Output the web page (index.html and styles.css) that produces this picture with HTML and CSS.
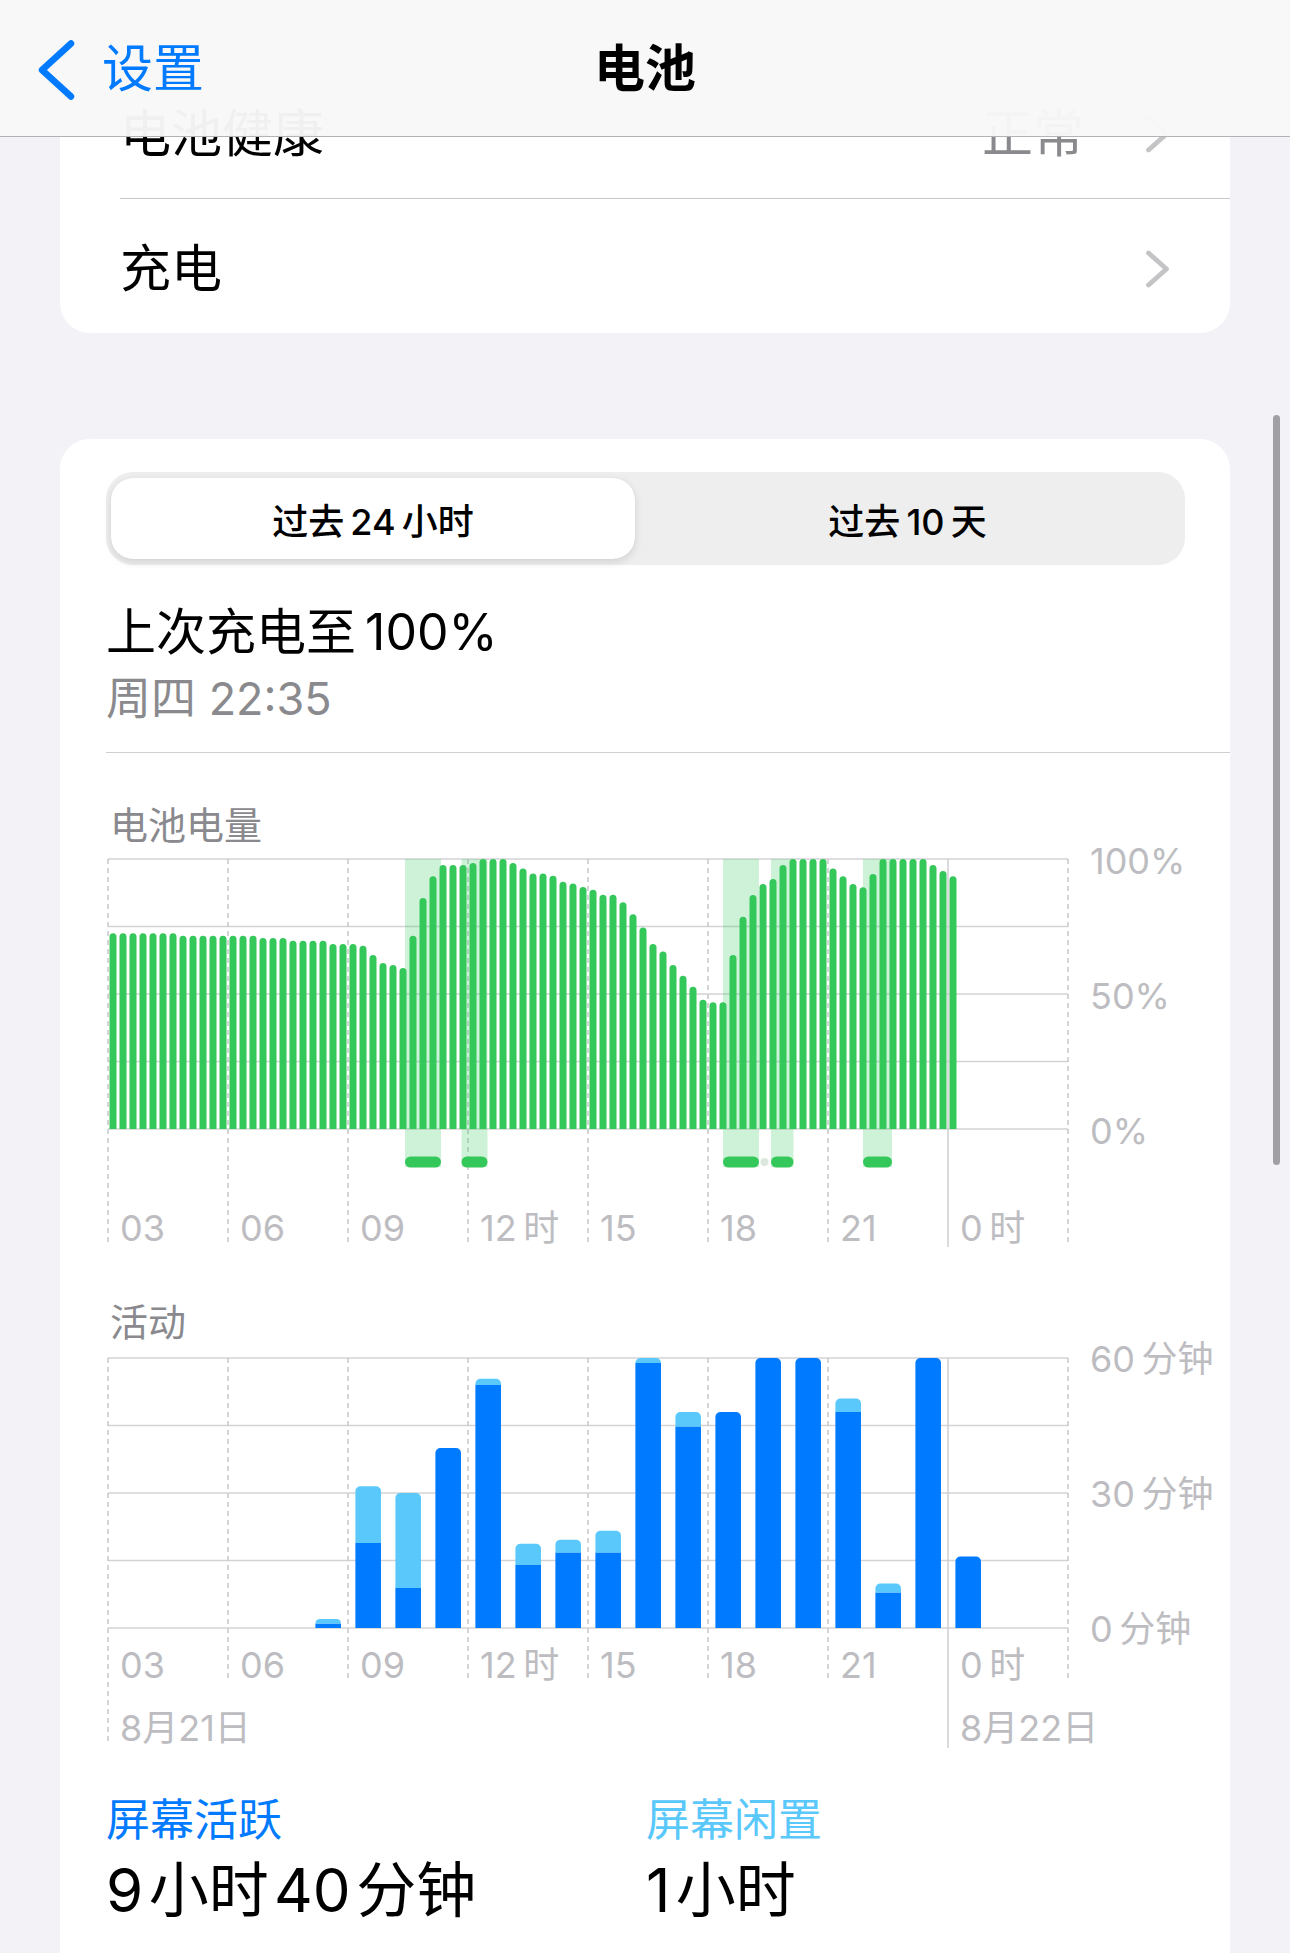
FILE: index.html
```html
<!doctype html>
<html lang="zh-CN">
  <head>
    <meta charset="UTF-8" />
    <meta name="viewport" content="width=device-width, initial-scale=1.0" />
    <title>电池</title>
    <link rel="stylesheet" href="styles.css">
  </head>
  <body>
    <header class="navbar">
      <a class="back" href="#">
        <svg class="back-icon" width="42" height="62" viewBox="0 0 42 62">
          <path d="M35 5.5 L6 32 L35 58.5" />
        </svg>
        <span>设置</span>
      </a>
      <h1 class="nav-title">电池</h1>
      <span></span>
    </header>

    <main class="content">
      <section class="group">
        <div class="row">
          <span class="row-label">电池健康</span>
          <span class="row-value">正常</span>
          <svg class="chevron" width="24" height="40" viewBox="0 0 24 40">
            <path d="M3.5 4 L21.5 20 L3.5 36" />
          </svg>
        </div>
        <div class="row">
          <span class="row-label">充电</span>
          <svg class="chevron" width="24" height="40" viewBox="0 0 24 40">
            <path d="M3.5 4 L21.5 20 L3.5 36" />
          </svg>
        </div>
      </section>

      <section class="group usage">
        <div class="segmented">
          <div class="segment active">过去&thinsp;24&thinsp;小时</div>
          <div class="segment">过去&thinsp;10&thinsp;天</div>
        </div>

        <div class="last-charge">
          <div class="charge-title">上次充电至&thinsp;100%</div>
          <div class="charge-time">周四 22:35</div>
        </div>

        <hr class="divider" />

        <div class="chart-title">电池电量</div>
        <svg class="chart" id="batteryChart" width="1170" height="400" viewBox="0 0 1170 400">
          <g class="grid"></g>
          <g class="zones"></g>
          <g class="bars"></g>
          <g class="axis">
            <text x="1030" y="24.5">100%</text>
            <text x="1030" y="159.5">50%</text>
            <text x="1030" y="294.5">0%</text>
            <text x="60" y="391.5">03</text>
            <text x="180" y="391.5">06</text>
            <text x="300" y="391.5">09</text>
            <text x="420" y="391.5">12&thinsp;时</text>
            <text x="540" y="391.5">15</text>
            <text x="660" y="391.5">18</text>
            <text x="780" y="391.5">21</text>
            <text x="900" y="391.5">0&thinsp;时</text>
          </g>
        </svg>

        <div class="chart-title activity-title">活动</div>
        <svg class="chart activity-chart" id="activityChart" width="1170" height="400" viewBox="0 0 1170 400">
          <g class="grid"></g>
          <g class="bars"></g>
          <g class="axis">
            <text x="1030" y="24">60&thinsp;分钟</text>
            <text x="1030" y="159">30&thinsp;分钟</text>
            <text x="1030" y="294">0&thinsp;分钟</text>
            <text x="60" y="330">03</text>
            <text x="180" y="330">06</text>
            <text x="300" y="330">09</text>
            <text x="420" y="330">12&thinsp;时</text>
            <text x="540" y="330">15</text>
            <text x="660" y="330">18</text>
            <text x="780" y="330">21</text>
            <text x="900" y="330">0&thinsp;时</text>
            <text x="60" y="393">8月21日</text>
            <text x="900" y="393">8月22日</text>
          </g>
        </svg>

        <div class="summary">
          <div class="summary-item">
            <div class="summary-label active-label">屏幕活跃</div>
            <div class="summary-value">9&#8202;小时&#8202;40&#8202;分钟</div>
          </div>
          <div class="summary-item">
            <div class="summary-label idle-label">屏幕闲置</div>
            <div class="summary-value">1&#8202;小时</div>
          </div>
        </div>
      </section>
    </main>

    <div class="scroll-indicator"></div>

    <script src="script.js"></script>
  </body>
</html>
```

FILE: styles.css
```css
/* Reset */
body,
h1,
hr {
  margin: 0;
  padding: 0;
}

body {
  font-family: Inter, "Noto Sans CJK SC", sans-serif;
  background-color: #f2f2f7;
  color: #000;
  width: 1290px;
  height: 1953px;
  overflow: hidden;
}

/* Navigation bar */
.navbar {
  position: fixed;
  top: 0;
  left: 0;
  right: 0;
  z-index: 10;
  height: 137px;
  box-sizing: border-box;
  padding: 2px 0 0 36px;
  display: grid;
  grid-template-columns: 1fr auto 1fr;
  align-items: center;
  background: rgba(248, 248, 249, 0.97);
  border-bottom: 1px solid #b3b3b5;
}

.back {
  display: flex;
  align-items: center;
  color: #007aff;
  text-decoration: none;
  font-size: 51px;
  line-height: 60px;
}

.back-icon {
  display: block;
  margin-right: 24px;
}

.back-icon path {
  fill: none;
  stroke: #007aff;
  stroke-width: 6.5;
  stroke-linecap: round;
  stroke-linejoin: round;
}

.nav-title {
  font-size: 51px;
  line-height: 60px;
  font-weight: 600;
  margin-right: 36px;
}

/* Grouped list */
.content {
  padding: 63px 60px 0;
}

.group {
  background: #fff;
  border-radius: 30px;
}

.row {
  display: flex;
  align-items: center;
  height: 135px;
  box-sizing: border-box;
  margin-left: 60px;
  padding: 6px 61px 0 0;
  font-size: 51px;
  line-height: 60px;
}

.row + .row {
  border-top: 1px solid #c8c8cb;
}

.row-label {
  flex: 1;
}

.row-value {
  color: #8a8a8e;
  margin-right: 61px;
}

.chevron {
  display: block;
}

.chevron path {
  fill: none;
  stroke: #c4c4c7;
  stroke-width: 4.8;
  stroke-linecap: round;
  stroke-linejoin: round;
}

/* Usage card */
.usage {
  margin-top: 106px;
  padding: 33px 45px 80px 46px;
}

.segmented {
  display: grid;
  grid-template-columns: 524px 1fr;
  height: 93px;
  box-sizing: border-box;
  padding: 6px 5px;
  background: #eeeeef;
  border-radius: 27px;
}

.segment {
  display: flex;
  align-items: center;
  justify-content: center;
  font-size: 36px;
  font-weight: 500;
  border-radius: 22px;
}

.segment.active {
  background: #fff;
  box-shadow: 0 3px 8px rgba(0, 0, 0, 0.12), 0 0 1px rgba(0, 0, 0, 0.08);
}

.last-charge {
  margin-top: 37px;
}

.charge-title {
  font-size: 50px;
  line-height: 60px;
}

.charge-time {
  margin-top: 10px;
  font-size: 45px;
  line-height: 54px;
  color: #8a8a8e;
}

.divider {
  border: none;
  border-top: 1px solid #cfcfd2;
  margin: 26px -45px 0 0;
}

.chart-title {
  margin-top: 49px;
  padding-left: 4px;
  font-size: 38px;
  line-height: 46px;
  color: #8a8a8e;
}

.activity-title {
  margin-top: 50px;
}

.chart {
  display: block;
  overflow: visible;
  margin: 1px 0 0 -46px;
}

.activity-chart {
  margin-top: 2.5px;
}

.axis text {
  font-size: 36px;
  fill: #bdbdc1;
}

/* Summary */
.summary {
  display: grid;
  grid-template-columns: 540px 1fr;
  margin-top: 46px;
}

.summary-label {
  font-size: 44px;
  line-height: 52px;
}

.active-label {
  color: #007aff;
}

.idle-label {
  color: #5ac8fa;
}

.summary-value {
  margin-top: 9px;
  font-size: 60px;
  line-height: 70px;
}

.scroll-indicator {
  position: fixed;
  top: 415px;
  right: 10px;
  width: 7px;
  height: 750px;
  border-radius: 4px;
  background: #a0a0a5;
}
```

FILE: script.js
```js
const NS = 'http://www.w3.org/2000/svg';

// battery level every 15 minutes, from 03:00
const battery = [
  72.5, 72.5, 72.5, 72.5, 72.5, 72.5, 72.5,
  71.6, 71.6, 71.6, 71.6, 71.6, 71.6, 71.6, 71.6,
  70.7, 70.7, 70.7,
  69.7, 69.7, 69.7, 69.7,
  68.5, 68.5, 68.5,
  67.9, 64.4, 61.5, 60.7, 59.6,
  71.6, 85.6, 93.6, 97.8, 97.8, 97.8, 98.5, 100, 100, 100,
  98.5, 96.5, 94.6, 94.6, 93.8, 91.6, 90.9, 89.6, 88.6, 86.8,
  86.8, 84, 79.5, 74.6, 68.5, 65.7, 60.7, 56.8, 52.7, 47.9,
  46.9, 46.9, 64.4, 78.6, 86.7, 90.7, 92.6, 97.8, 100, 100,
  100, 100, 96.5, 93.6, 90.7, 89.5, 94.4, 100, 100, 100,
  100, 100, 97.8, 95.6, 93.6,
];

// charging periods (x start, x end)
const charging = [
  [345, 381],
  [401.5, 427.5],
  [663, 699],
  [711, 733.5],
  [803, 832],
];

// minutes per hour: [screen on, screen on + idle]
const activity = [
  [0, 0], [0, 0], [0, 0], [0, 0], [0, 0],
  [1, 2], [18.9, 31.5], [8.9, 30], [40, 40], [54, 55.4],
  [14, 18.7], [16.8, 19.6], [16.8, 21.6], [58.9, 60], [44.8, 48],
  [48, 48], [60, 60], [60, 60], [48, 51], [7.9, 9.9],
  [60, 60], [15.9, 15.9], [0, 0], [0, 0],
];

const LEFT = 48;
const BASE = 280;
const ROWS = [10, 77.5, 145, 212.5, 280];

function add(parent, name, attrs) {
  const node = document.createElementNS(NS, name);
  for (const key in attrs) node.setAttribute(key, attrs[key]);
  parent.appendChild(node);
  return node;
}

function barPath(x, w, top, bottom, r) {
  r = Math.min(r, (bottom - top), w / 2);
  return `M${x},${bottom}V${top + r}A${r},${r} 0 0 1 ${x + r},${top}` +
    `H${x + w - r}A${r},${r} 0 0 1 ${x + w},${top + r}V${bottom}Z`;
}

function drawGrid(svg, ends) {
  const g = svg.querySelector('.grid');
  ROWS.forEach((y) => {
    add(g, 'line', { x1: LEFT, x2: LEFT + 960, y1: y, y2: y, stroke: '#d3d3d7', 'stroke-width': 1.5 });
  });
  for (let k = 0; k <= 8; k++) {
    const x = LEFT + k * 120;
    if (k === 7) {
      add(g, 'line', { x1: x, x2: x, y1: 10, y2: ends.solid, stroke: '#cfcfd3', 'stroke-width': 1.5 });
    } else {
      add(g, 'line', {
        x1: x, x2: x, y1: 10, y2: k === 0 ? ends.first : ends.dashed,
        stroke: '#c8c8cc', 'stroke-width': 1.5, 'stroke-dasharray': '5 4',
      });
    }
  }
}

// battery chart
const batterySvg = document.getElementById('batteryChart');
drawGrid(batterySvg, { dashed: 393, first: 393, solid: 398 });

const zones = batterySvg.querySelector('.zones');
charging.forEach(([x1, x2]) => {
  add(zones, 'rect', { x: x1, y: 10, width: x2 - x1, height: 308, fill: 'rgba(52, 199, 89, 0.24)' });
  add(zones, 'rect', { x: x1, y: 307.5, width: x2 - x1, height: 11, rx: 5.5, fill: '#34c759' });
});
add(zones, 'circle', { cx: 704.5, cy: 313, r: 4, fill: '#dce8de' });

const batteryBars = batterySvg.querySelector('.bars');
battery.forEach((level, i) => {
  const x = 49.5 + i * 10;
  const top = BASE - level * 2.7;
  add(batteryBars, 'path', { d: barPath(x, 7, top, BASE, 3.5), fill: '#34c759' });
});

// activity chart
const activitySvg = document.getElementById('activityChart');
drawGrid(activitySvg, { dashed: 333, first: 395, solid: 400 });

const activityBars = activitySvg.querySelector('.bars');
activity.forEach(([on, total], h) => {
  if (total <= 0) return;
  const x = 55.4 + h * 40;
  const onTop = BASE - on * 4.5;
  const totalTop = BASE - total * 4.5;
  if (total > on + 0.05) {
    add(activityBars, 'rect', { x: x, y: onTop, width: 25.6, height: BASE - onTop, fill: '#007aff' });
    add(activityBars, 'path', { d: barPath(x, 25.6, totalTop, onTop, 5), fill: '#5ac8fa' });
  } else {
    add(activityBars, 'path', { d: barPath(x, 25.6, onTop, BASE, 5), fill: '#007aff' });
  }
});
```
